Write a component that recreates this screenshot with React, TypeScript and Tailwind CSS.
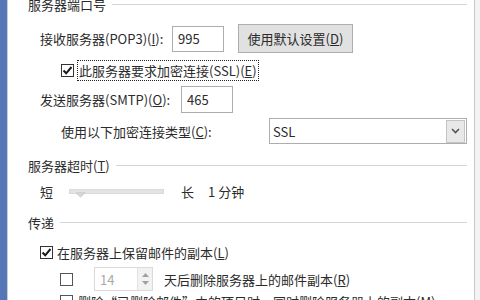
import React from "react";

const font = { fontFamily: '"Noto Sans CJK SC", "Noto Sans", sans-serif' };

function Check({ checked }: { checked: boolean }) {
  return (
    <div className="w-[13px] h-[13px] border border-[#333333] bg-white flex items-center justify-center shrink-0">
      {checked && (
        <svg width="11" height="11" viewBox="0 0 11 11">
          <path d="M1.5 5.5 L4.2 8.3 L9.5 2" fill="none" stroke="#1a1a1a" strokeWidth="2" />
        </svg>
      )}
    </div>
  );
}

function Section({ title, className }: { title: React.ReactNode; className?: string }) {
  return (
    <div className={"flex items-center shrink-0 h-[16px] pr-[7px] " + (className ?? "")}>
      <span className="whitespace-nowrap">{title}</span>
      <div className="flex-1 h-px bg-[#d5d5d5] ml-[6px]" />
    </div>
  );
}

export default function App() {
  return (
    <div
      className="w-[480px] h-[300px] overflow-hidden bg-white flex text-[13px] text-[#2b2b2b] leading-none"
      style={font}
    >
      <div className="w-[7px] bg-[#5677b6] shrink-0" />
      <div className="w-px bg-[#c9cdd4] shrink-0" />
      <div className="flex-1 flex flex-col pl-[20px] overflow-hidden">
        <Section title="服务器端口号" className="-mt-[4px]" />

        {/* POP3 row */}
        <div className="flex items-center shrink-0 h-[29px] mt-[12px] ml-[12px]">
          <span className="w-[132px] whitespace-nowrap">
            接收服务器(POP3)(<u>I</u>):
          </span>
          <div className="w-[52px] h-[26px] border border-[#abadb3] flex items-center pl-[5px]">995</div>
          <div className="ml-[14px] w-[115px] h-[29px] border border-[#adadad] bg-[#e1e1e1] flex items-center justify-center">
            使用默认设置(<u>D</u>)
          </div>
        </div>

        {/* SSL checkbox */}
        <div className="flex items-center shrink-0 h-[21px] mt-[7px] ml-[33px]">
          <Check checked />
          <div className="ml-[3px] h-[21px] border border-dotted border-[#222] flex items-center px-[1px] whitespace-nowrap">
            此服务器要求加密连接(SSL)(<u>E</u>)
          </div>
        </div>

        {/* SMTP row */}
        <div className="flex items-center shrink-0 h-[27px] mt-[5px] ml-[12px]">
          <span className="w-[141px] whitespace-nowrap">
            发送服务器(SMTP)(<u>O</u>):
          </span>
          <div className="w-[52px] h-[27px] border border-[#abadb3] flex items-center pl-[5px]">465</div>
        </div>

        {/* Encryption type */}
        <div className="flex items-center shrink-0 h-[26px] mt-[5px] ml-[33px] pr-[7px]">
          <span className="w-[208px] whitespace-nowrap">
            使用以下加密连接类型(<u>C</u>):
          </span>
          <div className="flex-1 h-[26px] border border-[#abadb3] flex items-center">
            <span className="pl-[3px] flex-1">SSL</span>
            <div className="w-[19px] h-[23px] mr-px bg-[#e8e8e8] border border-[#c5c5c5] flex items-center justify-center">
              <svg width="9" height="6" viewBox="0 0 9 6">
                <path d="M1 1 L4.5 4.5 L8 1" fill="none" stroke="#555" strokeWidth="1.6" />
              </svg>
            </div>
          </div>
        </div>

        <Section title={<>服务器超时(<u>T</u>)</>} className="mt-[13px]" />

        {/* slider row */}
        <div className="flex items-center shrink-0 h-[16px] mt-[10px] ml-[12px]">
          <span className="w-[29px]">短</span>
          <div className="relative w-[95px] h-[5px] bg-[#e3e3e3] border border-[#dadada]">
            <svg className="absolute left-[6px] top-[2px]" width="9" height="6" viewBox="0 0 9 6">
              <path d="M0 0 H9 V1 L4.5 5 L0 1 Z" fill="#d7d7d7" stroke="#c8c8c8" strokeWidth="0.8" />
            </svg>
          </div>
          <span className="ml-[17px]">长</span>
          <span className="ml-[14px]">1 分钟</span>
        </div>

        <Section title="传递" className="mt-[15px]" />

        {/* keep copy */}
        <div className="flex items-center shrink-0 h-[16px] mt-[14px] ml-[12px]">
          <Check checked />
          <span className="ml-[4px] whitespace-nowrap">
            在服务器上保留邮件的副本(<u>L</u>)
          </span>
        </div>

        {/* days row */}
        <div className="flex items-center shrink-0 h-[24px] mt-[7px] ml-[32px]">
          <div className="w-[13px] h-[13px] border border-[#555] bg-white shrink-0" />
          <div className="ml-[21px] w-[59px] h-[24px] border border-[#d9d9d9] flex items-center">
            <span className="flex-1 pl-[5px] text-[#a8a8a8]">14</span>
            <div className="w-[15px] h-[22px] flex flex-col items-center justify-center gap-[4px] bg-[#f2f2f2] border-l border-[#e2e2e2]">
              <svg width="7" height="4" viewBox="0 0 7 4">
                <path d="M0 4 L3.5 0 L7 4 Z" fill="#a0a0a0" />
              </svg>
              <svg width="7" height="4" viewBox="0 0 7 4">
                <path d="M0 0 L3.5 4 L7 0 Z" fill="#a0a0a0" />
              </svg>
            </div>
          </div>
          <span className="ml-[11px] whitespace-nowrap">
            天后删除服务器上的邮件副本(<u>R</u>)
          </span>
        </div>

        {/* last row (cut) */}
        <div className="flex items-center shrink-0 h-[16px] mt-[2px] ml-[32px]">
          <div className="w-[13px] h-[13px] border border-[#555] bg-white shrink-0" />
          <span className="ml-[5px] whitespace-nowrap">
            删除“已删除邮件”中的项目时，同时删除服务器上的副本(<u>M</u>)
          </span>
        </div>
      </div>
      <div className="w-px bg-[#c8c8c8] shrink-0" />
      <div className="w-[5px] bg-[#f3f3f3] shrink-0" />
    </div>
  );
}
